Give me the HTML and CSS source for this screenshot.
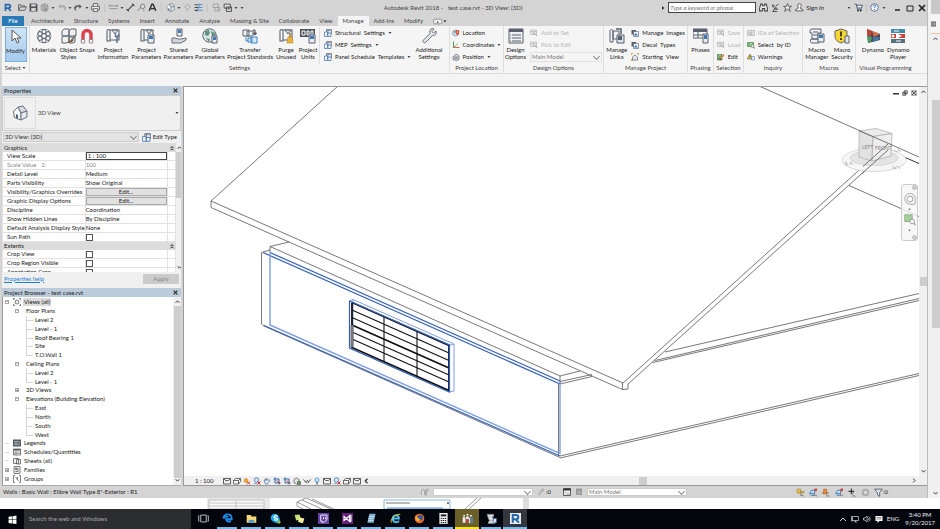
FILE: index.html
```
<!DOCTYPE html>
<html lang="en">
<head>
    <meta charset="UTF-8">
    <meta name="viewport" content="width=device-width, initial-scale=1.0">
    <title>Autodesk Revit 2018 - test case.rvt - 3D View: {3D}</title>
    <link rel="stylesheet" href="styles.css">
</head>
<body>
    <!-- icon sprite -->
    <svg class="sprite" aria-hidden="true">
        <symbol id="i-open" viewBox="0 0 16 16"><path d="M1 13V3h4l1 2h6v2M1 13l3-6h11l-3 6z" fill="none" stroke="#555" stroke-width="1.5"/></symbol>
        <symbol id="i-save" viewBox="0 0 16 16"><path d="M1 1h12l2 2v12H1z" fill="#4b5057"/><path d="M4 2h8v4H4zM4 9h8v5H4z" fill="#d4d4d4"/></symbol>
        <symbol id="i-cube" viewBox="0 0 16 16"><path d="M8 1l6 3v8l-6 3-6-3V4z" fill="#b4b4b4" stroke="#888"/><path d="M2 4l6 3 6-3M8 7v8" fill="none" stroke="#888"/><circle cx="11" cy="12" r="3" fill="#999"/></symbol>
        <symbol id="i-undo" viewBox="0 0 16 16"><path d="M7 2L2 6l5 4V7c4 0 6 1 6 3s-2 3-4 3c5 1 7-1 7-4 0-4-4-5-9-5z" fill="currentColor"/></symbol>
        <symbol id="i-print" viewBox="0 0 16 16"><path d="M4 6V1h8v5M4 12H1V6h14v6h-3M4 10h8v5H4z" fill="#eee" stroke="#555" stroke-width="1.5"/></symbol>
        <symbol id="i-dim" viewBox="0 0 16 16"><path d="M1 5h14M1 10h14M1 3v4M15 3v4" fill="none" stroke="#888" stroke-width="1.5"/></symbol>
        <symbol id="i-line" viewBox="0 0 16 16"><path d="M3 13L13 3M1 11l4 4M11 1l4 4" fill="none" stroke="#444" stroke-width="2"/></symbol>
        <symbol id="i-tag" viewBox="0 0 16 16"><path d="M1 14l6-7" stroke="#777" stroke-width="1.5"/><circle cx="10" cy="6" r="4" fill="none" stroke="#777" stroke-width="1.5"/><path d="M12 10v5" stroke="#777"/></symbol>
        <symbol id="i-text" viewBox="0 0 16 16"><path d="M2 14L7 2h2l5 12M4 10h8" fill="none" stroke="#333" stroke-width="2.5"/></symbol>
        <symbol id="i-house" viewBox="0 0 16 16"><path d="M1 7l5-5 3 6v7l-3-1-4-2V8z" fill="#f4f6f8" stroke="#6a727d"/><path d="M6 2l5-1 4 5-6 2z" fill="#d5dae0" stroke="#6a727d"/><path d="M9 8l6-2v6l-6 3z" fill="#e3e7ec" stroke="#6a727d"/><path d="M4 9l2 1v4l-2-1z" fill="#4b6480"/></symbol>
        <symbol id="i-section" viewBox="0 0 16 16"><path d="M8 2l5 5-5 5-5-5z" fill="none" stroke="#999" stroke-width="1.5"/><path d="M8 12v3" stroke="#999"/></symbol>
        <symbol id="i-thin" viewBox="0 0 16 16"><path d="M1 3h6M1 8h6M1 13h6" stroke="#444" stroke-width="2"/><path d="M8 3h7M8 8h7M8 13h7M10 1L6 15" stroke="#3b7fc4" stroke-width="1.4"/></symbol>
        <symbol id="i-close-win" viewBox="0 0 16 16"><path d="M2 2h9v6H2zM5 8h9v6H5z" fill="none" stroke="#999" stroke-width="1.4"/><path d="M9 9l5 5m0-5l-5 5" stroke="#999"/></symbol>
        <symbol id="i-switch" viewBox="0 0 16 16"><path d="M2 2h11v7H2zM6 7h9v8H6z" fill="#e5e5e5" stroke="#444" stroke-width="1.6"/><path d="M8 11h5" stroke="#444"/></symbol>
        <symbol id="i-caret" viewBox="0 0 8 8"><path d="M1 2h6L4 6z" fill="#444"/></symbol>
        <symbol id="i-up" viewBox="0 0 8 8"><path d="M1 6l3-3 3 3" fill="none" stroke="#333" stroke-width="1.6"/></symbol>
        <symbol id="i-down" viewBox="0 0 8 8"><path d="M1 2l3 3 3-3" fill="none" stroke="#333" stroke-width="1.6"/></symbol>
        <symbol id="i-right" viewBox="0 0 8 8"><path d="M2 1l3 3-3 3" fill="none" stroke="#333" stroke-width="1.6"/></symbol>
        <symbol id="i-play" viewBox="0 0 8 8"><path d="M2 0l5 4-5 4z" fill="#333"/></symbol>
        <symbol id="i-left" viewBox="0 0 8 8"><path d="M6 1L3 4l3 3" fill="none" stroke="#333" stroke-width="1.6"/></symbol>
        <symbol id="i-x" viewBox="0 0 8 8"><path d="M1 1l6 6M7 1L1 7" stroke="#222" stroke-width="1.7"/></symbol>
        <symbol id="i-collapse" viewBox="0 0 8 8"><path d="M2 4l2-2 2 2M2 7l2-2 2 2" fill="none" stroke="#222" stroke-width="1.3"/></symbol>

        <symbol id="i-arrow" viewBox="0 0 16 16"><path d="M4 1v11l3-3 2 5 2-1-2-4h4z" fill="#fff" stroke="#555" stroke-width="1"/></symbol>
        <symbol id="i-material" viewBox="0 0 16 16"><circle cx="8" cy="8" r="7.3" fill="#6b727c"/><g fill="#fff"><circle cx="8" cy="8" r="1.8"/><circle cx="8" cy="3.6" r="1.5"/><circle cx="8" cy="12.4" r="1.5"/><circle cx="4" cy="5.8" r="1.5"/><circle cx="12" cy="5.8" r="1.5"/><circle cx="4" cy="10.2" r="1.5"/><circle cx="12" cy="10.2" r="1.5"/><circle cx="1.8" cy="8" r=".8"/><circle cx="14.2" cy="8" r=".8"/><circle cx="5" cy="2.6" r=".8"/><circle cx="11" cy="2.6" r=".8"/><circle cx="5" cy="13.4" r=".8"/><circle cx="11" cy="13.4" r=".8"/></g></symbol>
        <symbol id="i-styles" viewBox="0 0 16 16"><path d="M1 3l2-2h5v6L6 8H1zM8 3l2-2h5v6l-2 1H8zM1 9l2-1h5v5l-2 2H1zM8 9h6v5l-2 1H8z" fill="#f1f1f1" stroke="#5b6470"/><path d="M15 7l-5 6" stroke="#777" stroke-width="1.6"/><path d="M11 11l-5 4 5-1 2-2z" fill="#8a5a2b"/></symbol>
        <symbol id="i-magnet" viewBox="0 0 16 16"><path d="M4 14V6.500a4 4 0 0 1 8 0V14" fill="none" stroke="#d9434b" stroke-width="3.400"/><path d="M2.300 11.500h3.400V15H2.300zM10.300 11.500h3.400V15h-3.400z" fill="#fff" stroke="#777" stroke-width=".8"/></symbol>
        <symbol id="i-sheet" viewBox="0 0 16 16"><path d="M2 3c0-2 3-2 3 0v10H2zM5 2h9v10H5z" fill="#f5f6f8" stroke="#59616c" stroke-width="1.1"/><path d="M7 2l3 4 3-4z" fill="#dfe3e8" stroke="#59616c"/></symbol>
        <symbol id="i-info" viewBox="0 0 16 16"><use href="#i-sheet"/><path d="M12 8v7M10.500 6v2.500h3V6" fill="none" stroke="#60738f" stroke-width="1.5"/></symbol>
        <symbol id="i-params" viewBox="0 0 16 16"><use href="#i-sheet"/><path d="M9 7h6v8H9z" fill="#e9edf2" stroke="#59616c"/><path d="M10 8h4v3h-4z" fill="#3f79b8"/></symbol>
        <symbol id="i-shared" viewBox="0 0 16 16"><path d="M6 1h5v7H6z" fill="#e9edf2" stroke="#59616c"/><path d="M7 2h3v3H7z" fill="#3f79b8"/><path d="M1 10h3l3 1h3l5-1v2l-5 3H1z" fill="#d3d7dc" stroke="#59616c" stroke-width=".9"/></symbol>
        <symbol id="i-globe" viewBox="0 0 16 16"><circle cx="7.500" cy="7.500" r="6.700" fill="#dfe7e6" stroke="#59616c"/><path d="M3 3l4-1 1 3-2 3-3-1zM9 3l4 2v4l-3-1zM4 10l4 1-1 3z" fill="#5f9383"/><path d="M10 8h5v7h-5z" fill="#e9edf2" stroke="#59616c"/><path d="M11 9h3v3h-3z" fill="#3f79b8"/></symbol>
        <symbol id="i-transfer" viewBox="0 0 16 16"><path d="M1 2h6v6H1zM5 3h6v5H5z" fill="#f3f5f7" stroke="#59616c"/><path d="M6 10h4v4H6zM9 9h6v6H9z" fill="#d9e8f6" stroke="#3f86c8"/><path d="M11 2h2v4M11.500 5l1.500 2 1.500-2z" fill="none" stroke="#444"/><path d="M4 9v4h2" fill="none" stroke="#3f86c8"/></symbol>
        <symbol id="i-purge" viewBox="0 0 16 16"><use href="#i-sheet"/><path d="M12 5v5" stroke="#a67922" stroke-width="1.5"/><path d="M10 9h4l1 6H9z" fill="#efb63e" stroke="#b98a2b" stroke-width=".7"/></symbol>
        <symbol id="i-units" viewBox="0 0 16 16"><path d="M0 1h15v8H0z" fill="#4c525a"/><path d="M2 3h3v4H2zM7 3h2v4H7zM11 3h2v4h-2z" fill="none" stroke="#fff"/><path d="M9 7h6v8H9z" fill="#e9edf2" stroke="#59616c"/><path d="M10 8h4v3h-4z" fill="#3f79b8"/></symbol>
        <symbol id="i-small-set" viewBox="0 0 16 16"><path d="M5 1h10v9H5z" fill="#dce6f2" stroke="#56606d" stroke-width="1.3"/><path d="M5 3h10M8 1v9" stroke="#56606d"/><path d="M1 6h6v9H1zM8 8h6v7H8z" fill="#f6f8fa" stroke="#3c6fae" stroke-width="1.4"/></symbol>
        <symbol id="i-wrench" viewBox="0 0 16 16"><path d="M10 1c2-1 3 0 3 0l-2 2.500 1.500 1.500L15 3c1 3-1 5-3.500 4.500L4.500 14.500c-1 1-3 0-2.500-2L9 5.500C8.500 4 9 2 10 1z" fill="#e4e6e9" stroke="#6a717b" stroke-width="1"/></symbol>
        <symbol id="i-location" viewBox="0 0 16 16"><circle cx="7" cy="8" r="6" fill="#c9dff0" stroke="#4a6f92"/><path d="M3 5l4-1v5z" fill="#5e8f6b"/><path d="M11 2c5 0 5 5 0 11-5-6-5-11 0-11z" fill="#d8472e"/><circle cx="11" cy="6" r="1.3" fill="#fff"/></symbol>
        <symbol id="i-coords" viewBox="0 0 16 16"><path d="M3 1v12" stroke="#3c8f3c" stroke-width="1.8"/><path d="M3 13h12" stroke="#d64b3b" stroke-width="1.8"/><path d="M3 13l9-8" stroke="#58a84f" stroke-width="1.5"/></symbol>
        <symbol id="i-position" viewBox="0 0 16 16"><path d="M2 8l6-6 6 4v7l-6 2-6-2z" fill="#dfe3e7" stroke="#59616c" stroke-width="1.5"/><path d="M4 8h8M5 11h6" stroke="#59616c" stroke-width="1.5"/></symbol>
        <symbol id="i-design" viewBox="0 0 16 16"><path d="M1 1h14v14H1z" fill="#eef0f2" stroke="#59616c"/><path d="M1 1h14v3H1z" fill="#59616c"/><path d="M4 7h9M4 10h9M4 13h9M2 7h1M2 10h1M2 13h1" stroke="#59616c" stroke-width="1.2"/></symbol>
        <symbol id="i-ghost" viewBox="0 0 16 16"><path d="M1 2h12v9H1zM1 5h12" fill="#eee" stroke="#b5b5b5" stroke-width="1.5"/><path d="M8 7l6 7M5 8h4" stroke="#aaa" stroke-width="2"/></symbol>
        <symbol id="i-links" viewBox="0 0 16 16"><path d="M1 3c0-2 3-2 3 0v11H1zM4 3h6v8H4z" fill="#f1f3f5" stroke="#59616c"/><path d="M8 7h7v8H8z" fill="#dbe1e8" stroke="#59616c"/><path d="M9 8h4v4H9z" fill="#59616c"/><path d="M7 1h5v5" fill="none" stroke="#59616c" stroke-width="1.5"/></symbol>
        <symbol id="i-images" viewBox="0 0 16 16"><path d="M1 2h9v9H1z" fill="#59616c"/><path d="M5 5h10v10H5z" fill="#eaf3fa" stroke="#59616c" stroke-width="1.3"/><path d="M6 13l3-5 5 5z" fill="#3f79b8"/></symbol>
        <symbol id="i-start" viewBox="0 0 16 16"><path d="M1 4V1h3M12 1h3v3M1 12v3h3" fill="none" stroke="#d79e32" stroke-width="1.8"/><path d="M3 8l5-4 5 4v6H3z" fill="#e6eaee" stroke="#59616c" stroke-width="1.4"/></symbol>
        <symbol id="i-phases" viewBox="0 0 16 16"><path d="M0 1h14v9H0z" fill="#f3f4f6" stroke="#59616c"/><path d="M0 1h14v3H0z" fill="#59616c"/><path d="M5 4v6M0 7h10" stroke="#59616c"/><path d="M10 6h5v9h-5z" fill="#e9edf2" stroke="#59616c"/><path d="M11 7h3v4h-3z" fill="#3f79b8"/></symbol>
        <symbol id="i-edit" viewBox="0 0 16 16"><path d="M1 3h9v11H1z" fill="#68a261" stroke="#3f4a40"/><path d="M2 8l4-4 3 3" fill="none" stroke="#fff"/><path d="M14 3l-7 9" stroke="#d68d3b" stroke-width="3"/><path d="M6 14l3-1-2-2z" fill="#333"/></symbol>
        <symbol id="i-ids" viewBox="0 0 16 16"><path d="M1 3h14v10H1z" fill="#e5e5e5" stroke="#b4b4b4" stroke-width="1.5"/><path d="M4 6v5M7 6v5h3V6z" fill="none" stroke="#b0b0b0" stroke-width="1.5"/></symbol>
        <symbol id="i-byid" viewBox="0 0 16 16"><path d="M1 3h12v8H1z" fill="#5fae57" stroke="#33723a"/><path d="M4 5v4M7 5v4h3V5z" fill="none" stroke="#fff"/><circle cx="11" cy="10" r="3" fill="#eaf6e8" stroke="#444"/><path d="M13 12l2 3" stroke="#444" stroke-width="1.5"/></symbol>
        <symbol id="i-warn" viewBox="0 0 16 16"><path d="M6 2l6 10H0z" fill="#f2cf35" stroke="#555"/><path d="M6 5v4M6 10v1" stroke="#222" stroke-width="1.5"/><path d="M9 7h6v7H9z" fill="#dfe9f4" stroke="#3c6fae"/></symbol>
        <symbol id="i-macro" viewBox="0 0 16 16"><path d="M3 1h9v4H9v6H3V5H1c0-3 0-4 2-4zM2 11h9c0 4-1 4-2 4H3c-2 0-2-3-1-4z" fill="#eef0f3" stroke="#59616c"/><path d="M4 4h5M4 7h4" stroke="#59616c"/><path d="M9 6h6v8H9z" fill="#e9edf2" stroke="#59616c"/><path d="M10 7h4v3h-4z" fill="#3f79b8"/></symbol>
        <symbol id="i-security" viewBox="0 0 16 16"><path d="M7 1l6 2v5c0 4-3 6-6 7-3-1-6-3-6-7V3z" fill="#f7d52f" stroke="#5b6470"/><path d="M7 3.500v5M7 10v2" stroke="#333" stroke-width="1.8"/><path d="M11 8h4v7h-4z" fill="#dfe6ee" stroke="#59616c"/></symbol>
        <symbol id="i-dynamo" viewBox="0 0 16 16"><path d="M2 1l13 5v6L3 15z" fill="#54424f"/><path d="M2 1l5 2-1 5-4-1z" fill="#c2453b"/><path d="M7 3l8 3-6 3z" fill="#d97046"/><path d="M2 8l5 1-1 5-3 1z" fill="#4f9a62"/><path d="M8 9l7 0-1 3-6 2z" fill="#3b77a8"/></symbol>
        <symbol id="i-player" viewBox="0 0 16 16"><path d="M1 1h14v4H1z" fill="#3f8cab"/><path d="M1 6h14v4H1z" fill="#cf3f37"/><path d="M1 11h14v4H1z" fill="#56707c"/><path d="M6 5l6 3-6 3z" fill="#fff"/><circle cx="3" cy="8" r="1.5" fill="#fff"/><path d="M4 3h5M6 13h5" stroke="#fff"/></symbol>

        <symbol id="i-binoc" viewBox="0 0 16 16"><path d="M3 2h3v3h4V2h3l2 8v4h-5v-4H6v4H1v-4z" fill="#eee" stroke="#444" stroke-width="1.8"/></symbol>
        <symbol id="i-key" viewBox="0 0 16 16"><path d="M3 3c0 6 4 9 9 8M3 3l9 8M8 9l-5 6h8M9 5l4-3" fill="none" stroke="#444" stroke-width="1.7"/></symbol>
        <symbol id="i-star" viewBox="0 0 16 16"><path d="M8 1l2 5h5l-4 3 2 6-5-4-5 4 2-6-4-3h5z" fill="#eee" stroke="#444" stroke-width="1.4"/></symbol>
        <symbol id="i-user" viewBox="0 0 16 16"><path d="M8 1c4 0 4 6 1 8l5 3v2H1v-2l5-3C4 7 4 1 8 1z" fill="#eee" stroke="#444" stroke-width="1.4"/></symbol>
        <symbol id="i-cart" viewBox="0 0 16 16"><path d="M1 2h3l2 9h8M4 4h11l-2 5H6" fill="#fff" stroke="#3f4f6b" stroke-width="1.6"/><circle cx="7" cy="13.500" r="1.5"/><circle cx="12" cy="13.500" r="1.5"/></symbol>
        <symbol id="i-help" viewBox="0 0 16 16"><circle cx="8" cy="8" r="6.800" fill="#eef4fa" stroke="#4a5f80" stroke-width="1.4"/><path d="M6 6c0-3 4-3 4 0 0 1-2 1-2 3M8 11v1.500" fill="none" stroke="#2f6cae" stroke-width="1.7"/></symbol>

        <symbol id="i-v-box" viewBox="0 0 16 16"><path d="M1 3h14v11H1zM1 3l4 4h6l4-4" fill="#eee" stroke="#333" stroke-width="1.5"/></symbol>
        <symbol id="i-v-cube" viewBox="0 0 16 16"><path d="M1 7l4-4h10v6l-4 5H1zM1 7h10v7M11 7l4-4" fill="#f4f4f4" stroke="#333" stroke-width="1.4"/></symbol>
        <symbol id="i-v-sun" viewBox="0 0 16 16"><circle cx="6" cy="7" r="4" fill="#f3ab2f" stroke="#cf7e17"/><path d="M8 9l6 6M14 9l-6 6" stroke="#d3362d" stroke-width="2"/></symbol>
        <symbol id="i-v-shadow" viewBox="0 0 16 16"><circle cx="7" cy="6" r="4.500" fill="#dbe6f2" stroke="#2e64a6" stroke-width="1.4"/><path d="M1 13h8" stroke="#2e64a6"/><path d="M9 9l6 6M15 9l-6 6" stroke="#d3362d" stroke-width="2"/></symbol>
        <symbol id="i-v-tea" viewBox="0 0 16 16"><path d="M2 6h9c4-1 4 3 0 4l-2 4H5z" fill="#e7edf4" stroke="#35689f" stroke-width="1.4"/><path d="M4 4h5" stroke="#333" stroke-width="1.5"/></symbol>
        <symbol id="i-v-crop" viewBox="0 0 16 16"><path d="M4 1v11h11M1 4h11v11" fill="none" stroke="#2e64a6" stroke-width="2"/><path d="M7 7l7 6" stroke="#d3362d" stroke-width="2"/></symbol>
        <symbol id="i-v-lock" viewBox="0 0 16 16"><path d="M2 5l5-3 5 3v6l-5 3-5-3z" fill="#e6e9ec" stroke="#444" stroke-width="1.3"/><path d="M9 9h6v6H9z" fill="#68a261" stroke="#333"/></symbol>
        <symbol id="i-v-glass" viewBox="0 0 16 16"><path d="M1 5l4 5 4-3 2 4 4-6M5 10l3 3" fill="none" stroke="#333" stroke-width="1.6"/></symbol>
        <symbol id="i-v-bulb" viewBox="0 0 16 16"><circle cx="8" cy="6" r="4" fill="#cfe6fa" stroke="#3e86c6" stroke-width="1.5"/><path d="M8 10v5" stroke="#333" stroke-width="2"/></symbol>

        <symbol id="i-sel" viewBox="0 0 16 16"><path d="M2 2h6v4h6v3H2z" fill="#f0bd3f" stroke="#9d7a22"/><path d="M9 6v8l2-2 2 3" fill="#fff" stroke="#444" stroke-width="1.2"/></symbol>
        <symbol id="i-sel-x" viewBox="0 0 16 16"><path d="M1 10l4-6h6l-2 6zM3 13h7" fill="#cfe2f3" stroke="#2e73b3" stroke-width="1.5"/><path d="M10 1l4 4M14 1l-4 4" stroke="#d3362d" stroke-width="2"/><path d="M10 8v6l2-2 2 3" fill="#fff" stroke="#444"/></symbol>
        <symbol id="i-pin" viewBox="0 0 16 16"><path d="M3 2h5v6h3v2H1V8h2z" fill="#ef8a3c" stroke="#b3541b"/><path d="M9 7v8l2-2 2 3" fill="#fff" stroke="#444"/></symbol>
        <symbol id="i-drag" viewBox="0 0 16 16"><path d="M6 1v10M1 6h10" stroke="#333" stroke-width="2"/><path d="M9 7v8l2-2 2 3" fill="#fff" stroke="#444"/></symbol>
        <symbol id="i-funnel" viewBox="0 0 16 16"><path d="M1 2h14L10 8v7l-4-3V8z" fill="#dbe4ec" stroke="#4d5a68" stroke-width="1.5"/></symbol>
    </svg>

    <div class="desktop">
        <div class="app">
            <header class="titlebar">
                <div class="qat">
                    <svg class="logo" viewBox="0 0 16 16"><path d="M3 15V2h6c5 0 5 7 0 7H3M8 9l6 6" fill="none" stroke="#2768ad" stroke-width="3.5"/></svg>
                    <button title="Open"><svg><use href="#i-open"/></svg></button>
                    <button title="Save"><svg><use href="#i-save"/></svg></button>
                    <button title="Sync"><svg><use href="#i-cube"/></svg></button>
                    <svg class="caret"><use href="#i-caret"/></svg>
                    <button title="Undo" class="dim"><svg><use href="#i-undo"/></svg></button>
                    <svg class="caret"><use href="#i-caret"/></svg>
                    <button title="Redo" class="flip"><svg><use href="#i-undo"/></svg></button>
                    <svg class="caret"><use href="#i-caret"/></svg>
                    <button title="Print"><svg><use href="#i-print"/></svg></button>
                    <span class="sep"></span>
                    <button title="Measure"><svg><use href="#i-dim"/></svg></button>
                    <svg class="caret"><use href="#i-caret"/></svg>
                    <button title="Aligned Dimension"><svg><use href="#i-line"/></svg></button>
                    <button title="Tag"><svg><use href="#i-tag"/></svg></button>
                    <button title="Text"><svg><use href="#i-text"/></svg></button>
                    <span class="sep"></span>
                    <button title="Default 3D View"><svg><use href="#i-house"/></svg></button>
                    <svg class="caret"><use href="#i-caret"/></svg>
                    <button title="Section"><svg><use href="#i-section"/></svg></button>
                    <button title="Thin Lines"><svg><use href="#i-thin"/></svg></button>
                    <span class="sep"></span>
                    <button title="Close Hidden"><svg><use href="#i-close-win"/></svg></button>
                    <button title="Switch Windows"><svg><use href="#i-switch"/></svg></button>
                    <svg class="caret"><use href="#i-caret"/></svg>
                    <svg class="caret"><use href="#i-caret"/></svg>
                </div>
                <div class="doc-title"><span>Autodesk Revit 2018 -</span><span>test case.rvt - 3D View: {3D}</span></div>
                <div class="infocenter">
                    <svg class="caret"><use href="#i-play"/></svg>
                    <input type="text" class="search" placeholder="Type a keyword or phrase" aria-label="Search help">
                    <button title="Search"><svg><use href="#i-binoc"/></svg></button>
                    <button title="Subscription"><svg><use href="#i-key"/></svg></button>
                    <button title="Favorites"><svg><use href="#i-star"/></svg></button>
                    <button class="signin"><svg><use href="#i-user"/></svg>Sign In</button>
                    <svg class="caret"><use href="#i-caret"/></svg>
                    <button title="Store"><svg><use href="#i-cart"/></svg></button>
                    <span class="sep"></span>
                    <button title="Help"><svg><use href="#i-help"/></svg></button>
                    <svg class="caret"><use href="#i-caret"/></svg>
                </div>
                <div class="win-buttons">
                    <button title="Minimize"><svg viewBox="0 0 8 8"><path d="M1 6h5" stroke="#222" stroke-width="1.5"/></svg></button>
                    <button title="Maximize"><svg viewBox="0 0 8 8"><path d="M1 2h6v5H1z" fill="none" stroke="#222"/></svg></button>
                    <button title="Close"><svg><use href="#i-x"/></svg></button>
                </div>
            </header>

            <nav class="tabs">
                <button class="file">File</button>
                <button>Architecture</button>
                <button>Structure</button>
                <button>Systems</button>
                <button>Insert</button>
                <button>Annotate</button>
                <button>Analyze</button>
                <button>Massing &amp; Site</button>
                <button>Collaborate</button>
                <button>View</button>
                <button class="active">Manage</button>
                <button>Add-Ins</button>
                <button>Modify</button>
                <button title="Minimize ribbon" class="ribbon-toggle"><svg viewBox="0 0 24 12"><rect x="1" y="2" width="14" height="8" rx="2" fill="#eee" stroke="#666"/><path d="M6 8l2-3 2 3zM18 4h5l-2.500 4z" fill="#444"/></svg></button>
            </nav>

            <div class="ribbon">
                <section class="panel p-select">
                    <div class="tools"><button class="big on"><svg><use href="#i-arrow"/></svg><span>Modify</span></button></div>
                    <h2>Select <svg class="caret"><use href="#i-caret"/></svg></h2>
                </section>
                <section class="panel p-settings">
                    <div class="tools">
                        <button class="big"><svg><use href="#i-material"/></svg><span>Materials</span></button>
                        <button class="big"><svg><use href="#i-styles"/></svg><span>Object<br>Styles</span></button>
                        <button class="big"><svg><use href="#i-magnet"/></svg><span>Snaps</span></button>
                        <button class="big"><svg><use href="#i-info"/></svg><span>Project<br>Information</span></button>
                        <button class="big"><svg><use href="#i-params"/></svg><span>Project<br>Parameters</span></button>
                        <button class="big"><svg><use href="#i-shared"/></svg><span>Shared<br>Parameters</span></button>
                        <button class="big"><svg><use href="#i-globe"/></svg><span>Global<br>Parameters</span></button>
                        <button class="big"><svg><use href="#i-transfer"/></svg><span>Transfer<br>Project Standards</span></button>
                        <button class="big"><svg><use href="#i-purge"/></svg><span>Purge<br>Unused</span></button>
                        <button class="big"><svg><use href="#i-units"/></svg><span>Project<br>Units</span></button>
                        <div class="stack ruled">
                            <button><svg><use href="#i-small-set"/></svg>Structural&nbsp; Settings<svg class="caret"><use href="#i-caret"/></svg></button>
                            <button><svg><use href="#i-small-set"/></svg>MEP&nbsp; Settings<svg class="caret"><use href="#i-caret"/></svg></button>
                            <button><svg><use href="#i-small-set"/></svg>Panel Schedule&nbsp; Templates<svg class="caret"><use href="#i-caret"/></svg></button>
                        </div>
                        <button class="big more"><svg><use href="#i-wrench"/></svg><span>Additional<br>Settings</span></button>
                    </div>
                    <h2>Settings</h2>
                </section>
                <section class="panel p-location">
                    <div class="tools">
                        <div class="stack">
                            <button><svg><use href="#i-location"/></svg>Location</button>
                            <button><svg><use href="#i-coords"/></svg>Coordinates<svg class="caret"><use href="#i-caret"/></svg></button>
                            <button><svg><use href="#i-position"/></svg>Position<svg class="caret"><use href="#i-caret"/></svg></button>
                        </div>
                    </div>
                    <h2>Project Location</h2>
                </section>
                <section class="panel p-design">
                    <div class="tools">
                        <button class="big"><svg><use href="#i-design"/></svg><span>Design<br>Options</span></button>
                        <div class="stack">
                            <button disabled><svg><use href="#i-ghost"/></svg>Add to Set</button>
                            <button disabled><svg><use href="#i-ghost"/></svg>Pick to Edit</button>
                            <span class="pick"><select aria-label="Active design option"><option>Main Model</option></select></span>
                        </div>
                    </div>
                    <h2>Design Options</h2>
                </section>
                <section class="panel p-project">
                    <div class="tools">
                        <button class="big"><svg><use href="#i-links"/></svg><span>Manage<br>Links</span></button>
                        <div class="stack">
                            <button><svg><use href="#i-images"/></svg>Manage&nbsp; Images</button>
                            <button><svg><use href="#i-images"/></svg>Decal&nbsp; Types</button>
                            <button><svg><use href="#i-start"/></svg>Starting&nbsp; View</button>
                        </div>
                    </div>
                    <h2>Manage Project</h2>
                </section>
                <section class="panel p-phasing">
                    <div class="tools"><button class="big"><svg><use href="#i-phases"/></svg><span>Phases</span></button></div>
                    <h2>Phasing</h2>
                </section>
                <section class="panel p-selection">
                    <div class="tools">
                        <div class="stack">
                            <button disabled><svg><use href="#i-ghost"/></svg>Save</button>
                            <button disabled><svg><use href="#i-ghost"/></svg>Load</button>
                            <button><svg><use href="#i-edit"/></svg>Edit</button>
                        </div>
                    </div>
                    <h2>Selection</h2>
                </section>
                <section class="panel p-inquiry">
                    <div class="tools">
                        <div class="stack">
                            <button disabled><svg><use href="#i-ids"/></svg>IDs of Selection</button>
                            <button><svg><use href="#i-byid"/></svg>Select&nbsp; by ID</button>
                            <button><svg><use href="#i-warn"/></svg>Warnings</button>
                        </div>
                    </div>
                    <h2>Inquiry</h2>
                </section>
                <section class="panel p-macros">
                    <div class="tools">
                        <button class="big"><svg><use href="#i-macro"/></svg><span>Macro<br>Manager</span></button>
                        <button class="big"><svg><use href="#i-security"/></svg><span>Macro<br>Security</span></button>
                    </div>
                    <h2>Macros</h2>
                </section>
                <section class="panel p-visual">
                    <div class="tools">
                        <button class="big"><svg><use href="#i-dynamo"/></svg><span>Dynamo</span></button>
                        <button class="big"><svg><use href="#i-player"/></svg><span>Dynamo<br>Player</span></button>
                    </div>
                    <h2>Visual Programming</h2>
                </section>
            </div>

            <main class="workspace">
                <aside class="palettes">
                    <section class="properties">
                        <header class="palette-head"><h3>Properties</h3><button title="Close"><svg><use href="#i-x"/></svg></button></header>
                        <div class="type-selector">
                            <span class="preview"><svg><use href="#i-house"/></svg></span>
                            <span class="type-name">3D View</span>
                            <svg class="caret"><use href="#i-caret"/></svg>
                        </div>
                        <div class="type-row">
                            <span class="pick"><select aria-label="View"><option>3D View: {3D}</option></select></span>
                            <button><svg><use href="#i-small-set"/></svg>Edit Type</button>
                        </div>
                        <div class="grid-wrap">
                            <table class="props">
                                <tbody>
                                    <tr class="group"><th colspan="2">Graphics</th><td><svg><use href="#i-collapse"/></svg></td></tr>
                                    <tr><th><label for="scale">View Scale</label></th><td><input id="scale" type="text" value="1 : 100"></td><td></td></tr>
                                    <tr class="off"><th>Scale Value &nbsp; 1:</th><td>100</td><td></td></tr>
                                    <tr><th>Detail Level</th><td>Medium</td><td></td></tr>
                                    <tr><th>Parts Visibility</th><td>Show Original</td><td></td></tr>
                                    <tr><th>Visibility/Graphics Overrides</th><td><button>Edit...</button></td><td></td></tr>
                                    <tr><th>Graphic Display Options</th><td><button>Edit...</button></td><td></td></tr>
                                    <tr><th>Discipline</th><td>Coordination</td><td></td></tr>
                                    <tr><th>Show Hidden Lines</th><td>By Discipline</td><td></td></tr>
                                    <tr><th>Default Analysis Display Style</th><td>None</td><td></td></tr>
                                    <tr><th><label for="sun">Sun Path</label></th><td><input id="sun" type="checkbox"></td><td></td></tr>
                                    <tr class="group"><th colspan="2">Extents</th><td><svg><use href="#i-collapse"/></svg></td></tr>
                                    <tr><th><label for="crop">Crop View</label></th><td><input id="crop" type="checkbox"></td><td></td></tr>
                                    <tr><th><label for="region">Crop Region Visible</label></th><td><input id="region" type="checkbox"></td><td></td></tr>
                                    <tr><th><label for="anno">Annotation Crop</label></th><td><input id="anno" type="checkbox"></td><td></td></tr>
                                </tbody>
                            </table>
                            <div class="vscroll short"><svg><use href="#i-up"/></svg><i></i><svg><use href="#i-down"/></svg></div>
                        </div>
                        <footer class="props-foot"><a href="#help">Properties help</a><button disabled>Apply</button></footer>
                    </section>

                    <section class="browser">
                        <header class="palette-head"><h3>Project Browser - test case.rvt</h3><button title="Close"><svg><use href="#i-x"/></svg></button></header>
                        <div class="tree-wrap">
                            <ul class="tree">
                                <li class="l0"><b>−</b><svg viewBox="0 0 16 16"><path d="M1 4V1h3M12 1h3v3M1 12v3h3M12 15h3v-3" fill="none" stroke="#555" stroke-width="1.5"/><circle cx="8" cy="8" r="4" fill="#eee" stroke="#555" stroke-width="1.5"/></svg><span class="picked">Views (all)</span></li>
                                <li class="l1"><b>−</b><span>Floor Plans</span></li>
                                <li class="l2"><span>Level 2</span></li>
                                <li class="l2"><span>Level - 1</span></li>
                                <li class="l2"><span>Roof Bearing 1</span></li>
                                <li class="l2"><span>Site</span></li>
                                <li class="l2 last"><span>T.O.Wall 1</span></li>
                                <li class="l1"><b>−</b><span>Ceiling Plans</span></li>
                                <li class="l2"><span>Level 2</span></li>
                                <li class="l2 last"><span>Level - 1</span></li>
                                <li class="l1"><b>+</b><span>3D Views</span></li>
                                <li class="l1"><b>−</b><span>Elevations (Building Elevation)</span></li>
                                <li class="l2"><span>East</span></li>
                                <li class="l2"><span>North</span></li>
                                <li class="l2"><span>South</span></li>
                                <li class="l2 last"><span>West</span></li>
                                <li class="l0"><em></em><svg viewBox="0 0 16 16"><path d="M0 1h16v14H0z" fill="#555c66"/><path d="M2 5h12M2 8h12M2 11h12M6 4v9" stroke="#c9ced4"/></svg><span>Legends</span></li>
                                <li class="l0"><em></em><svg viewBox="0 0 16 16"><path d="M1 2h14v12H1z" fill="#fff" stroke="#555" stroke-width="1.5"/><path d="M1 2h14v3H1z" fill="#555"/><path d="M1 8h14M1 11h14M6 5v9" stroke="#555"/></svg><span>Schedules/Quantities</span></li>
                                <li class="l0"><em></em><svg viewBox="0 0 16 16"><path d="M1 3h10v10H1zM7 5h8v9H7z" fill="#eee" stroke="#555" stroke-width="1.5"/></svg><span>Sheets (all)</span></li>
                                <li class="l0"><b>+</b><svg viewBox="0 0 16 16"><path d="M2 1h12v14H2zM5 4h3v3H5zM10 4v7H5" fill="#eee" stroke="#555" stroke-width="1.5"/></svg><span>Families</span></li>
                                <li class="l0"><b>+</b><svg viewBox="0 0 16 16"><path d="M4 1H1v14h3M12 1h3v14h-3M5 4l6 8M9 4v5" fill="none" stroke="#555" stroke-width="1.5"/></svg><span>Groups</span></li>
                            </ul>
                            <div class="vscroll long"><svg><use href="#i-up"/></svg><i></i><svg><use href="#i-down"/></svg></div>
                        </div>
                    </section>
                </aside>

                <section class="view">
                    <div class="canvas">
                        <svg class="model" viewBox="184 87 735 389" preserveAspectRatio="xMidYMid slice">
                            <!-- roof -->
                            <g class="edge">
                                <path d="M338 86L211 201L623 383L888 144"/>
                                <path d="M211 201V207.500L622.500 389.500V383M622.500 389.500L628 389V384L888 150"/>
                                <path d="M759 86L919 157M849 185.500L919 216.500"/>
                                <path d="M665 352L919 293.500M655 360.500L919 298.500M653 362.500L919 300.500"/>
                            </g>
                            <path class="edge strong" d="M888 150L919 163.500"/>
                            <!-- walls -->
                            <g class="edge">
                                <path d="M289 242L270 246.500L560 376L580 371M270 246.500V252M270 250L261.500 252.500V324L264 326L560 457.500"/>
                                <path d="M560 376V384M560 381.500L592 374.500M560 384L592 376.500"/>
                                <path d="M560 456L919 373.500M560 458L919 375.500M558.500 383V456"/>
                            </g>
                            <g class="pick-dark">
                                <path d="M270 252.500L560 381M263 252.500L560 384M264 325.500L560 456"/>
                            </g>
                            <g class="pick-light">
                                <path d="M270 252.500V325L560 453.500V382"/>
                            </g>
                            <!-- louvre window -->
                            <path class="pick-light thin" d="M349 301L353 299.500L454 344V391L449 392M353 299.500V346M449 345.500L454 344"/>
                            <path class="slats" d="M352 310L449 353M352 317.500L449 360.500M352 332L449 375M352 339L449 382M384 317V362M417 331V376"/>
                            <path class="slats heavy" d="M352 302.500L449 345.500V390.500L352 347.500V302.500M352 325L449 368"/>
                            <path class="jamb" d="M352 325V347"/>
                            <path class="pick-dark" d="M349.500 301V348L449.500 392V345L349.500 301"/>
                            <!-- view cube -->
                            <g class="cube">
                                <ellipse cx="874" cy="160" rx="32" ry="11.500"/>
                                <ellipse cx="874" cy="158" rx="24" ry="7.500" class="hole"/>
                                <path class="compass" d="M844 163l4 2m-2-4l1 5m3-4l3 3m-4 0l3-3M892 166l4 3m-3 0l4-3m1 0l2 3M894 150l3 2m1-3l3 3m-4 0l2-2"/>
                                <path d="M859 131L876 128.500L892 133.500L873 136.500z"/>
                                <path d="M859 131L873 136.500L872 161L859 157z" class="side"/>
                                <path d="M873 136.500L892 133.500L891 156L872 161z"/>
                                <text x="862" y="149">LEFT</text>
                                <text x="875" y="150">FRONT</text>
                            </g>
                            <path class="edge" d="M863 166.500L888 144M862 173.500L888 150M859 130.500L892 145"/>
                        </svg>
                        <div class="doc-buttons">
                            <button title="Minimize view"><svg viewBox="0 0 8 8"><path d="M0 5h8" stroke="#333" stroke-width="2"/></svg></button>
                            <button title="Restore view"><svg viewBox="0 0 8 8"><path d="M3 1h4v4H3zM1 3h4v4H1z" fill="#ddd" stroke="#333"/></svg></button>
                            <button title="Close view"><svg viewBox="0 0 8 8"><path d="M1 1h6v6H1z" fill="#ddd" stroke="#777"/><path d="M1 1l6 6M7 1L1 7" stroke="#333"/></svg></button>
                        </div>
                        <div class="navbar">
                            <svg class="dot" viewBox="0 0 8 8"><circle cx="4" cy="4" r="3" fill="#ddd" stroke="#888"/></svg>
                            <button title="Steering wheel"><svg viewBox="0 0 16 16"><path d="M1 8a7 7 0 0 1 14-1v8H8a7 7 0 0 1-7-7z" fill="#f2f2f2" stroke="#999"/><rect x="4.500" y="4.500" width="7" height="7" rx="2.500" fill="#fff" stroke="#888"/></svg></button>
                            <svg class="caret"><use href="#i-caret"/></svg>
                            <button title="Zoom"><svg viewBox="0 0 16 16"><path d="M1 1h10v9H1z" fill="#a7cf98" stroke="#82a876"/><circle cx="11" cy="10" r="3" fill="#fff" stroke="#888"/><path d="M13 12l2 3" stroke="#888" stroke-width="1.5"/></svg></button>
                            <svg class="caret"><use href="#i-caret"/></svg>
                            <svg class="dot" viewBox="0 0 8 8"><circle cx="4" cy="4" r="3" fill="#ddd" stroke="#888"/></svg>
                        </div>
                    </div>
                    <div class="vscroll mid"><svg><use href="#i-up"/></svg><i></i><svg><use href="#i-down"/></svg></div>
                    <div class="viewbar">
                        <span class="scale">1 : 100</span>
                        <button title="Detail"><svg><use href="#i-v-box"/></svg></button>
                        <button title="Visual Style"><svg><use href="#i-v-cube"/></svg></button>
                        <button title="Sun Path"><svg><use href="#i-v-sun"/></svg></button>
                        <button title="Shadows"><svg><use href="#i-v-shadow"/></svg></button>
                        <button title="Render"><svg><use href="#i-v-tea"/></svg></button>
                        <button title="Crop"><svg><use href="#i-v-crop"/></svg></button>
                        <button title="Crop Region"><svg><use href="#i-v-crop"/></svg></button>
                        <button title="Lock"><svg><use href="#i-v-lock"/></svg></button>
                        <button title="Hide"><svg><use href="#i-v-glass"/></svg></button>
                        <button title="Reveal"><svg><use href="#i-v-bulb"/></svg></button>
                        <button title="Worksharing"><svg><use href="#i-v-box"/></svg></button>
                        <button title="Properties"><svg><use href="#i-v-shadow"/></svg></button>
                        <button title="Analytical"><svg><use href="#i-v-cube"/></svg></button>
                        <button title="Displacement"><svg><use href="#i-v-box"/></svg></button>
                        <button title="Scroll left"><svg class="caret"><use href="#i-left"/></svg></button>
                        <div class="hscroll"><i></i><svg><use href="#i-right"/></svg></div>
                    </div>
                </section>
            </main>

            <footer class="statusbar">
                <span class="msg">Walls : Basic Wall : Elibre Wall Type 8"-Exterior : R1</span>
                <svg class="ic" viewBox="0 0 16 16"><path d="M1 14V6l3-4 3 4v8M9 15V4l5-2v4h-3v9" fill="#ddd" stroke="#999" stroke-width="1.5"/></svg>
                <span class="pick"><select aria-label="Workset"><option></option></select></span>
                <span class="count"><svg class="ic" viewBox="0 0 16 16"><path d="M3 14L9 3l5-1-2 5-4 1-3 6z" fill="#bbb" stroke="#999"/></svg>:0</span>
                <svg class="ic" viewBox="0 0 16 16"><path d="M1 1h14v14H1z" fill="#eee" stroke="#333" stroke-width="1.5"/><path d="M1 1h14v4H1z" fill="#333"/><path d="M4 8l2 2M7 12h6" stroke="#333"/></svg>
                <svg class="ic" viewBox="0 0 16 16"><path d="M2 1h12v13H2z" fill="#999"/><path d="M5 6l6 3-6 3" fill="none" stroke="#ddd"/></svg>
                <span class="pick"><select aria-label="Design option"><option>Main Model</option></select></span>
                <div class="sel-tools">
                    <button title="Select links"><svg><use href="#i-sel"/></svg></button>
                    <button title="Select underlay"><svg><use href="#i-sel-x"/></svg></button>
                    <button title="Select pinned"><svg><use href="#i-pin"/></svg></button>
                    <button title="Select by face"><svg><use href="#i-sel-x"/></svg></button>
                    <button title="Drag on selection"><svg><use href="#i-drag"/></svg></button>
                    <button title="Processes"><svg viewBox="0 0 16 16"><circle cx="8" cy="8" r="5" fill="none" stroke="#aaa" stroke-width="3"/></svg></button>
                    <button title="Filter"><svg><use href="#i-funnel"/></svg>:0</button>
                </div>
            </footer>
        </div>

        <!-- browser window showing behind the app -->
        <div class="behind">
            <div class="behind-top"><svg viewBox="0 0 8 8"><path d="M0 1h8M0 4h8M0 7h8" stroke="#222" stroke-width="1.5"/></svg></div>
            <div class="vscroll page"><svg><use href="#i-up"/></svg><i></i><svg><use href="#i-down"/></svg></div>
        </div>
    </div>

    <div class="peek">
        <svg viewBox="0 498 940 11" preserveAspectRatio="xMidYMin slice">
            <path d="M207 498h63v11h-63z" fill="#e9e9e9"/>
            <path d="M209 500h55v9h-55z" fill="#fafafa" stroke="#bbb"/>
            <path d="M210 503h53M210 506h53M236 501v8" stroke="#c4c4c4"/>
            <path d="M297 502l14 7M297 502l9-4M306 498l25 11M302 500l20 9M312 499l22 10M297 502v4l6 3M465 509l12-11M469 509l12-11" fill="none" stroke="#999"/>
            <path d="M384 500h66v9h-66z" fill="#fff" stroke="#8bb9e0"/>
            <path d="M386 503h24" stroke="#777"/><path d="M387 508h56" stroke="#5a8fd0"/><path d="M447 502l2 2M449 502l-2 2" stroke="#444" stroke-width=".7"/>
            <path d="M523 498h6v11h-6z" fill="#ddd"/>
        </svg>
    </div>

    <footer class="taskbar">
        <button class="start" title="Start"><svg viewBox="0 0 16 16"><path d="M1 3l6-1v6H1zM8 2l7-1v7H8zM1 9h6v6l-6-1zM8 9h7v7l-7-1z" fill="#fff"/></svg></button>
        <input type="text" class="cortana" placeholder="Search the web and Windows" aria-label="Search Windows">
        <button class="task plain" title="Task View"><svg viewBox="0 0 16 16"><path d="M4 3h8v10H4zM2 4H1v8h1M14 4h1v8h-1" fill="none" stroke="#ddd" stroke-width="1.2"/></svg></button>
        <button class="task" title="Edge"><svg viewBox="0 0 16 16"><path d="M2 8c1-8 12-8 12 0v1H6c0 4 4 4 7 3M2 8c2-3 5-3 7-2" fill="none" stroke="#1e88e5" stroke-width="2.8"/></svg></button>
        <button class="task" title="Explorer"><svg viewBox="0 0 16 16"><path d="M1 3h6l1 2h7v9H1z" fill="#f8d775"/><path d="M4 10h8v4H4z" fill="#4f9fd6"/></svg></button>
        <button class="task" title="Skype"><svg viewBox="0 0 16 16"><circle cx="7" cy="7" r="6" fill="#18a5e8"/><circle cx="10" cy="10" r="4.500" fill="#18a5e8"/><path d="M11 5c-2-2-6-1-5 1s5 1 5 3-4 2-5 0" fill="none" stroke="#fff" stroke-width="1.8"/><circle cx="13" cy="13" r="2.500" fill="#8bc34a"/></svg></button>
        <button class="task" title="Sticky Notes"><svg viewBox="0 0 16 16"><path d="M1 3l7-1 2 7-7 2z" fill="#c7dd75"/><path d="M7 6l8 2-2 7-7-2z" fill="#f2ec9b"/></svg></button>
        <button class="task" title="Twitch"><svg viewBox="0 0 16 16"><path d="M0 0h16v16H0z" fill="#6441a4"/><path d="M4 3h9v7l-3 3H8l-2 1v-2H4zM8 6v3M11 6v3" fill="none" stroke="#fff" stroke-width="1.3"/></svg></button>
        <button class="task" title="Visual Studio"><svg viewBox="0 0 16 16"><path d="M0 0h16v16H0z" fill="#68217a"/><path d="M3 5l8 7V4L3 11zM11 3l2 1v8l-2 1" fill="none" stroke="#fff" stroke-width="1.7"/></svg></button>
        <button class="task" title="Notepad"><svg viewBox="0 0 16 16"><path d="M5 1h9l-3 13H2z" fill="#7fb3cf"/><path d="M4 5h8M3 8h8M3 11h8" stroke="#dff0f8"/></svg></button>
        <button class="task" title="Internet Explorer"><svg viewBox="0 0 16 16"><path d="M13 11c-2 4-9 3-9-3s9-6 9 0H4" fill="none" stroke="#4cc3f0" stroke-width="2.6"/><path d="M2 14C-1 10 9 0 15 2" fill="none" stroke="#f0c93e" stroke-width="1.4"/></svg></button>
        <button class="task" title="Firefox"><svg viewBox="0 0 16 16"><circle cx="8" cy="8" r="7" fill="#e66a22"/><circle cx="9" cy="7" r="4" fill="#2c5c9c"/><path d="M2 4c3 0 3 4 7 5 1 3-5 4-7 0z" fill="#f5a832"/></svg></button>
        <button class="task" title="Calculator"><svg viewBox="0 0 16 16"><path d="M2 0h12v16H2z" fill="#eee"/><path d="M4 2h8v3H4z" fill="#222"/><path d="M4 8h8M4 11h8M4 14h8" stroke="#222" stroke-width="1.5" stroke-dasharray="2 1"/></svg></button>
        <button class="task alert" title="Meeting"><svg viewBox="0 0 16 16"><g fill="#eee"><circle cx="3" cy="4" r="1.500"/><circle cx="8" cy="2.500" r="1.500"/><circle cx="13" cy="4" r="1.500"/><path d="M1 6h4v8H1zM6 5h4v4H6z"/></g><path d="M6 9h3v6H6z" fill="#c0473e"/><path d="M10 7h2v8h-2z" fill="#ddd"/><path d="M13 6h3v9h-3z" fill="#5b80b8"/></svg></button>
        <button class="task" title="Macro"><svg viewBox="0 0 16 16"><path d="M2 2h9v3H9l2 6H5L3 6zM5 11h8v4H3z" fill="#d5d9de" stroke="#aaa"/><path d="M11 8h4v6h-4z" fill="#eee" stroke="#3f79b8"/></svg></button>
        <button class="task current" title="Revit"><svg viewBox="0 0 16 16"><path d="M0 0h16v16H0z" fill="#e8edf4"/><path d="M4 14V3h5c4 0 4 6 0 6H5M8 9l5 5" fill="none" stroke="#2768ad" stroke-width="3"/></svg></button>
        <div class="tray">
            <svg viewBox="0 0 8 8"><path d="M1 6l3-3 3 3" fill="none" stroke="#ddd"/></svg>
            <svg viewBox="0 0 16 16"><path d="M3 3h12v8H3zM7 14h5M9 11v3M1 2v10h3" fill="none" stroke="#ddd" stroke-width="1.4"/></svg>
            <svg viewBox="0 0 16 16"><path d="M1 6h3l4-4v12l-4-4H1zM10 5c2 2 2 4 0 6M12 3c3 3 3 7 0 10" fill="none" stroke="#ddd" stroke-width="1.4"/></svg>
            <svg viewBox="0 0 16 16"><path d="M1 2h14v10H9l-4 4v-4H1z" fill="#fff"/><path d="M3 5h10M3 8h10" stroke="#222"/></svg>
            <span>ENG</span>
            <time>3:40 PM<br>9/20/2017</time>
        </div>
    </footer>
</body>
</html>
```
FILE: styles.css
```
* {
    box-sizing: border-box;
}
body {
    margin: 0;
    height: 100vh;
    display: flex;
    flex-direction: column;
    overflow: hidden;
    font-family: Lato, "Open Sans", sans-serif;
    font-size: 6px;
    line-height: 8px;
    color: #222;
    background: #fff;
}
button, input, select {
    font: inherit;
    color: inherit;
    margin: 0;
    padding: 0;
    border: 0;
    background: none;
}
button {
    display: flex;
    align-items: center;
    justify-content: center;
    white-space: nowrap;
}
button svg {
    width: 9px;
    height: 9px;
    flex: none;
}
h2, h3, ul {
    margin: 0;
    padding: 0;
    font-size: 6px;
    font-weight: 400;
}
.sprite {
    position: absolute;
    width: 0;
    height: 0;
}
svg.caret {
    width: 4px;
    height: 4px;
    flex: none;
}

/* frame */
.desktop {
    flex: 1;
    display: flex;
    min-height: 0;
}
.app {
    flex: 1;
    min-width: 0;
    display: flex;
    flex-direction: column;
    padding-left: 2px;
    border-right: 1px solid #bbb;
    background: #d4d4d4;
}

/* title bar */
.titlebar {
    display: flex;
    align-items: center;
    height: 15px;
}
.qat {
    display: flex;
    align-items: center;
    gap: 2px;
    width: 243px;
    padding-left: 2px;
}
.qat .logo {
    width: 8px;
    height: 9px;
    margin-right: 4px;
}
.sep {
    width: 1px;
    height: 8px;
    background: #c2c2c2;
}
.qat .sep {
    margin: 0 2px;
}
.dim {
    color: #aaa;
}
.flip {
    color: #666;
    transform: scaleX(-1);
}
.doc-title {
    flex: 1;
    display: flex;
    justify-content: center;
    gap: 5px;
    white-space: nowrap;
    color: #444;
}
.infocenter {
    display: flex;
    align-items: center;
    gap: 3px;
}
.search {
    width: 88px;
    height: 11px;
    padding: 0 1px;
    border: 1px solid #444;
    background: #fff;
}
.search::placeholder {
    color: #777;
    font-style: italic;
    opacity: 1;
}
.signin {
    gap: 2px;
    margin-right: 20px;
}
.win-buttons {
    display: flex;
    gap: 4px;
    padding: 0 1px 0 8px;
}
.win-buttons svg {
    width: 8px;
    height: 8px;
}

/* tabs */
.tabs {
    display: flex;
    height: 11px;
    padding-top: 1px;
}
.tabs button {
    padding: 0 5px;
    color: #444;
}
.tabs .file {
    width: 22px;
    margin-right: 2px;
    background: #2a7ab5;
    color: #fff;
}
.tabs .active {
    background: #f5f5f5;
}
.tabs .ribbon-toggle svg {
    width: 14px;
    height: 7px;
}

/* ribbon */
.ribbon {
    display: flex;
    height: 60px;
    padding-bottom: 12px;
    background: #f5f5f5;
    box-shadow: inset 0 -12px #f4f4f4, inset 0 -13px #dcdcdc;
}
.panel {
    display: flex;
    flex-direction: column;
    border-right: 1px solid #dedede;
    white-space: nowrap;
}
.panel h2 {
    height: 10px;
    text-align: center;
    color: #444;
}
.tools {
    flex: 1;
    display: flex;
    justify-content: center;
    padding-top: 1px;
}
.big {
    flex-direction: column;
    justify-content: flex-start;
    gap: 2px;
    padding-top: 1px;
    line-height: 7px;
}
.big svg {
    width: 16px;
    height: 16px;
}
.big.on {
    width: 22px;
    height: 35px;
    border: 1px solid #7fb0dc;
    background: linear-gradient(#cfe3f6, #a5cbee);
}
.stack {
    display: flex;
    flex-direction: column;
    align-items: flex-start;
    text-align: left;
}
.stack > * {
    height: 12px;
    gap: 3px;
}
.stack button svg:first-child {
    width: 8px;
    height: 8px;
}
.stack button:disabled {
    color: #b5b5b5;
}
.stack.ruled {
    border-left: 1px solid #dedede;
    padding-left: 4px;
}
.pick {
    position: relative;
    display: flex;
    align-items: center;
}
.pick select {
    appearance: none;
    width: 100%;
    height: 10px;
    padding: 0 1px;
    border: 1px solid #ccc;
    border-radius: 0;
    background: #fff;
    color: #777;
}
.pick::after {
    content: "";
    position: absolute;
    right: 3px;
    top: calc(50% - 3px);
    width: 4px;
    height: 4px;
    border: solid #888;
    border-width: 0 1px 1px 0;
    transform: rotate(45deg);
}
.p-select {
    width: 28px;
}
.p-settings {
    width: 420px;
}
.p-settings .tools {
    display: grid;
    grid-template-columns: 28px 21px 16px 36px 31px 33px 30px 50px 22px 22px 90px 1fr;
}
.p-location {
    width: 54px;
}
.p-design {
    width: 100px;
}
.p-design .pick {
    width: 72px;
}
.p-design .pick select {
    border-color: #e2e2e2;
    background: #f5f5f5;
}
.p-design .tools, .p-project .tools {
    gap: 4px;
}
.p-project {
    width: 84px;
}
.p-phasing {
    width: 26px;
}
.p-selection {
    width: 30px;
}
.p-inquiry {
    width: 59px;
}
.p-macros {
    width: 53px;
}
.p-macros .tools, .p-visual .tools {
    gap: 3px;
}
.p-visual {
    width: 59px;
    border-right: 0;
}

/* palettes */
.workspace {
    flex: 1;
    display: flex;
    min-height: 0;
}
.palettes {
    width: 179px;
    display: flex;
    flex-direction: column;
    background: #f0f0f0;
}
.palette-head {
    display: flex;
    align-items: center;
    justify-content: space-between;
    height: 9px;
    padding: 0 3px 0 2px;
    background: #bccbda;
}
.palette-head svg {
    width: 5px;
    height: 5px;
}
.type-selector {
    display: flex;
    align-items: center;
    height: 36px;
    padding: 2px 1px;
    border: 1px solid #ccc;
    background: #f0f0f0;
}
.preview {
    display: flex;
    align-items: center;
    justify-content: center;
    width: 32px;
    height: 32px;
    border: 1px solid #ddd;
}
.preview svg {
    width: 16px;
    height: 16px;
}
.type-name {
    flex: 1;
    padding-left: 2px;
    color: #444;
}
.type-row {
    display: flex;
    justify-content: space-between;
    align-items: center;
    height: 12px;
    padding: 0 4px 0 1px;
}
.type-row .pick {
    width: 136px;
}
.type-row select {
    background: #e3e3e3;
    color: #333;
}
.type-row button {
    gap: 2px;
}
.grid-wrap {
    display: flex;
    height: 129px;
    overflow: hidden;
    background: #fff;
}
.props {
    flex: 1;
    align-self: flex-start;
    table-layout: fixed;
    border-collapse: collapse;
    white-space: nowrap;
}
.props th, .props td {
    height: 9px;
    padding: 0;
    border: 1px solid #e2e2e2;
    line-height: 8px;
    text-align: left;
    font-weight: 400;
}
.props th {
    width: 81px;
    padding-left: 4px;
}
.props td:last-child {
    width: 6px;
}
.props .group th, .props .group td {
    height: 8px;
    padding-left: 1px;
    border-color: #dcdcdc;
    background: #dcdcdc;
    line-height: 7px;
}
.props .off {
    color: #888;
}
.props svg {
    display: block;
    width: 6px;
    height: 6px;
}
.props input, .props td button {
    display: block;
}
.props input[type="text"], .props td button {
    width: 81px;
    height: 8px;
}
.props input[type="text"] {
    padding: 0 1px;
    border: 1px solid #444;
}
.props td button {
    border: 1px solid #aaa;
    background: #e1e1e1;
    line-height: 6px;
}
.props input[type="checkbox"] {
    appearance: none;
    width: 7px;
    height: 7px;
    border: 1px solid #555;
    background: #fff;
}
.props-foot {
    display: flex;
    align-items: center;
    justify-content: space-between;
    height: 13px;
    padding: 0 2px;
}
.props-foot a {
    color: #1b7fd6;
}
.props-foot button {
    width: 36px;
    height: 10px;
    background: #cbcbcb;
    color: #888;
}
.browser {
    flex: 1;
    display: flex;
    flex-direction: column;
    min-height: 0;
    margin-top: 3px;
}
.tree-wrap {
    flex: 1;
    display: flex;
    min-height: 0;
    border-left: 1px solid #999;
    border-bottom: 1px solid #aaa;
    background: #fff;
}
.tree {
    flex: 1;
    display: grid;
    grid-auto-rows: 1fr;
    padding: 1px 0 2px 2px;
    list-style: none;
}
.tree li {
    position: relative;
    display: flex;
    align-items: center;
    min-height: 0;
}
.tree svg {
    width: 8px;
    height: 8px;
    margin: 0 3px 0 4px;
}
.tree b {
    width: 4px;
    height: 4px;
    border: 1px solid #aaa;
    font-size: 4px;
    line-height: 2px;
    text-align: center;
    color: #444;
}
.tree em {
    width: 4px;
    height: 1px;
    background: #ddd;
}
.tree .picked {
    padding: 0 1px;
    margin-left: -1px;
    background: #dcdcdc;
}
.l1 {
    padding-left: 10px;
}
.l1 b {
    margin-right: 7px;
}
.l2 {
    padding-left: 30px;
}
.l2::before {
    content: "";
    position: absolute;
    left: 21px;
    top: 0;
    width: 1px;
    height: 100%;
    background: #d5d5d5;
}
.l2.last::before {
    height: 50%;
}
.l2::after {
    content: "";
    position: absolute;
    left: 21px;
    top: 50%;
    width: 7px;
    height: 1px;
    background: #d5d5d5;
}

/* scroll bars */
.vscroll {
    width: 8px;
    flex: none;
    display: flex;
    flex-direction: column;
    align-items: center;
    background: #f0f0f0;
}
.vscroll svg {
    width: 5px;
    height: 5px;
    margin: 2px 0;
}
.vscroll i {
    width: 7px;
    background: #cdcdcd;
}
.vscroll svg:last-child {
    margin-top: auto;
}
.short i {
    height: 46px;
}
.long i {
    flex: 1;
}
.mid i {
    height: 9px;
    margin-top: 181px;
}
.page i {
    width: 8px;
    height: 228px;
    margin-top: 57px;
}

/* drawing area */
.view {
    flex: 1;
    min-width: 0;
    display: grid;
    grid-template-columns: 1fr 8px;
    grid-template-rows: 1fr 9px;
    margin-left: 2px;
    border: solid #999;
    border-width: 1px 0 1px 1px;
    background: #fff;
}
.canvas {
    position: relative;
    overflow: hidden;
    min-height: 0;
}
.model {
    position: absolute;
    width: 100%;
    height: 100%;
}
.model path {
    fill: none;
}
.edge {
    stroke: #555;
    stroke-width: .8;
}
.edge.strong {
    stroke: #333;
    stroke-width: 1;
}
.pick-dark {
    stroke: #3560bb;
    stroke-width: 1.2;
}
.pick-light {
    stroke: #7f9fe6;
    stroke-width: 1.4;
}
.pick-light.thin {
    stroke-width: 1;
}
.slats {
    stroke: #111;
    stroke-width: 1.1;
}
.slats.heavy {
    stroke-width: 1.8;
}
.jamb {
    stroke: #777;
    stroke-width: 3;
}
.cube path, .cube ellipse {
    fill: #ededed;
    stroke: #aaa;
    stroke-width: .7;
}
.cube ellipse {
    fill: #f6f6f6;
    stroke: #ccc;
}
.cube .side {
    fill: #e2e2e2;
}
.cube .hole {
    fill: #e4e4e4;
}
.cube .compass {
    fill: none;
}
.cube text {
    font-size: 5px;
    fill: #888;
}
.doc-buttons {
    position: absolute;
    top: 3px;
    right: 2px;
    display: flex;
    gap: 3px;
}
.doc-buttons svg {
    width: 6px;
    height: 6px;
}
.navbar {
    position: absolute;
    top: 97px;
    right: 1px;
    width: 17px;
    height: 57px;
    display: flex;
    flex-direction: column;
    align-items: center;
    justify-content: space-between;
    border: 1px solid #ccc;
    border-radius: 3px;
    background: rgba(245, 245, 245, .8);
}
.navbar .dot {
    align-self: flex-end;
    width: 5px;
    height: 5px;
}
.navbar button svg {
    width: 12px;
    height: 12px;
}
.navbar .caret {
    width: 3px;
    height: 3px;
}
.viewbar {
    grid-column: 1 / -1;
    display: flex;
    align-items: center;
    gap: 2px;
    padding-left: 11px;
    background: #f0f0f0;
}
.viewbar .scale {
    width: 26px;
}
.viewbar button svg {
    width: 8px;
    height: 8px;
}
.viewbar button svg.caret {
    width: 6px;
    height: 6px;
}
.hscroll {
    flex: 1;
    display: flex;
    align-items: center;
    justify-content: space-between;
    padding-right: 10px;
}
.hscroll i {
    width: 8px;
    height: 8px;
    margin-left: 49%;
    background: #cdcdcd;
}
.hscroll svg {
    width: 5px;
    height: 5px;
}

/* status bar */
.statusbar {
    display: flex;
    align-items: center;
    height: 12px;
    white-space: nowrap;
}
.statusbar .msg {
    width: 419px;
    padding-left: 1px;
}
.ic {
    width: 8px;
    height: 8px;
    margin-right: 4px;
}
.statusbar .pick {
    width: 100px;
    margin-right: 4px;
}
.statusbar .pick select {
    height: 8px;
    line-height: 6px;
}
.count {
    display: flex;
    align-items: center;
    width: 26px;
}
.count .ic {
    margin-right: 1px;
}
.sel-tools {
    flex: 1;
    display: flex;
    justify-content: flex-end;
    gap: 4px;
    padding-right: 39px;
}

/* window behind */
.behind {
    width: 12px;
    display: flex;
    flex-direction: column;
    padding-left: 3px;
    background: #f0f0f0;
}
.behind-top {
    height: 34px;
    padding-top: 20px;
    border-bottom: 1px solid #e8c4a8;
    background: linear-gradient(#c8c8c8 14px, #f5f5f5 14px);
}
.behind-top svg {
    display: block;
    width: 5px;
    height: 8px;
}
.behind .vscroll {
    flex: 1;
    width: 9px;
}
.peek {
    height: 11px;
    background: #fff;
}
.peek svg {
    display: block;
    width: 100%;
    height: 11px;
}

/* taskbar */
.taskbar {
    display: flex;
    height: 20px;
    background: #03060d;
    color: #eee;
}
.start {
    width: 24px;
}
.cortana {
    width: 167px;
    padding: 0 5px;
    background: #2b2d31;
}
.cortana::placeholder {
    color: #a8a8a8;
    opacity: 1;
}
.task {
    width: 24px;
    padding-bottom: 1px;
    border: solid #03060d;
    border-width: 0 2px;
    background: linear-gradient(#76b9ed, #76b9ed) bottom / 100% 2px no-repeat;
}
.task.plain {
    background: none;
}
.task svg {
    width: 11px;
    height: 11px;
}
.task.alert {
    border: 0;
    background: linear-gradient(#6b5f28 18px, #f8e71c 18px);
}
.task.current {
    border: 0;
    background: linear-gradient(#33373d 18px, #76b9ed 18px);
}
.tray {
    flex: 1;
    display: flex;
    align-items: center;
    justify-content: flex-end;
    gap: 4px;
    padding-right: 5px;
}
.tray svg {
    width: 8px;
    height: 8px;
}
.tray time {
    margin-left: 2px;
    text-align: center;
}
```
